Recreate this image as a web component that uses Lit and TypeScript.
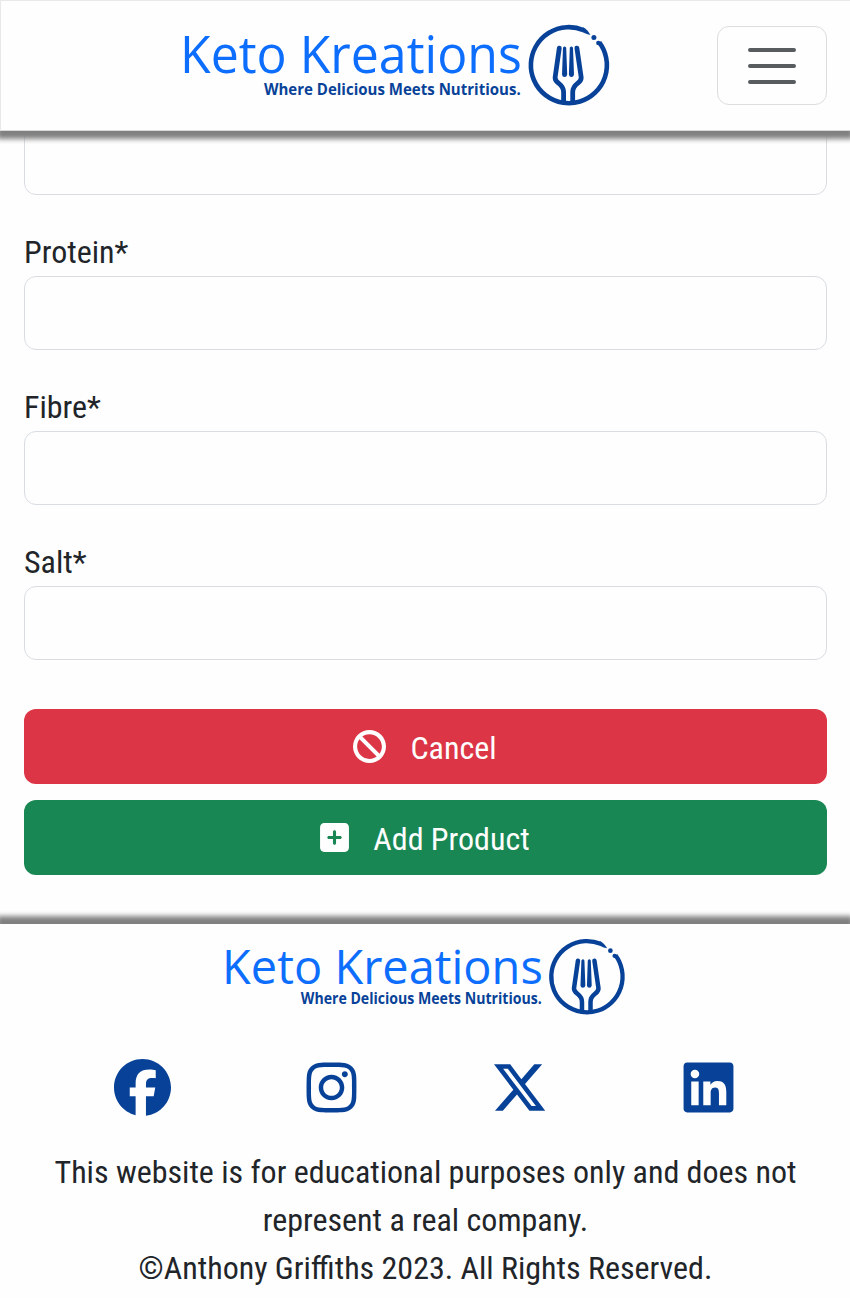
import { LitElement, html, css } from "lit";
import { customElement } from "lit/decorators.js";

const icons = {
  ban: "M367.2 412.5L99.5 144.8C77.1 176.1 64 214.5 64 256c0 106 86 192 192 192c41.5 0 79.9-13.1 111.2-35.5zm45.3-45.3C434.9 335.9 448 297.5 448 256c0-106-86-192-192-192c-41.5 0-79.9 13.1-111.2 35.5L412.5 367.2zM0 256a256 256 0 1 1 512 0A256 256 0 1 1 0 256z",
  plus: "M64 32C28.7 32 0 60.7 0 96V416c0 35.3 28.7 64 64 64H384c35.3 0 64-28.7 64-64V96c0-35.3-28.7-64-64-64H64zM200 344V280H136c-13.3 0-24-10.7-24-24s10.7-24 24-24h64V168c0-13.3 10.7-24 24-24s24 10.7 24 24v64h64c13.3 0 24 10.7 24 24s-10.7 24-24 24H248v64c0 13.3-10.7 24-24 24s-24-10.7-24-24z",
};

const socials = [
  { name: "Facebook", box: "0 0 512 512", d: "M512 256C512 114.6 397.4 0 256 0S0 114.6 0 256C0 376 82.7 476.8 194.2 504.5V334.2H141.4V256h52.8V222.3c0-87.1 39.4-127.5 125-127.5c16.2 0 44.2 3.2 55.7 6.4V172c-6-.6-16.5-1-29.6-1c-42 0-58.2 15.9-58.2 57.2V256h83.6l-14.4 78.2H287V510.1C413.8 494.8 512 386.9 512 256h0z" },
  { name: "Instagram", box: "-32 0 512 512", d: "M224.1 141c-63.6 0-114.9 51.3-114.9 114.9s51.3 114.9 114.9 114.9S339 319.5 339 255.9 287.7 141 224.1 141zm0 189.6c-41.1 0-74.7-33.5-74.7-74.7s33.5-74.7 74.7-74.7 74.7 33.5 74.7 74.7-33.6 74.7-74.7 74.7zm146.4-194.3c0 14.9-12 26.8-26.8 26.8-14.9 0-26.8-12-26.8-26.8s12-26.8 26.8-26.8 26.8 12 26.8 26.8zm76.1 27.2c-1.7-35.9-9.9-67.7-36.2-93.9-26.2-26.2-58-34.4-93.9-36.2-37-2.1-147.9-2.1-184.9 0-35.8 1.7-67.6 9.9-93.9 36.1s-34.4 58-36.2 93.9c-2.1 37-2.1 147.9 0 184.9 1.7 35.9 9.9 67.7 36.2 93.9s58 34.4 93.9 36.2c37 2.1 147.9 2.1 184.9 0 35.9-1.7 67.7-9.9 93.9-36.2 26.2-26.2 34.4-58 36.2-93.9 2.1-37 2.1-147.8 0-184.8zM398.8 388c-7.8 19.6-22.9 34.7-42.6 42.6-29.5 11.7-99.5 9-132.1 9s-102.7 2.6-132.1-9c-19.6-7.8-34.7-22.9-42.6-42.6-11.7-29.5-9-99.5-9-132.1s-2.6-102.7 9-132.1c7.8-19.6 22.9-34.7 42.6-42.6 29.5-11.7 99.5-9 132.1-9s102.7-2.6 132.1 9c19.6 7.8 34.7 22.9 42.6 42.6 11.7 29.5 9 99.5 9 132.1s2.7 102.7-9 132.1z" },
  { name: "X", box: "0 0 512 512", d: "M389.2 48h70.6L305.6 224.2 487 464H345L233.7 318.6 106.5 464H35.8L200.7 275.5 26.8 48H172.4L272.9 180.9 389.2 48zM364.4 421.8h39.1L151.1 88h-42L364.4 421.8z" },
  { name: "LinkedIn", box: "-32 0 512 512", d: "M416 32H31.9C14.3 32 0 46.5 0 64.3v383.4C0 465.5 14.3 480 31.9 480H416c17.6 0 32-14.5 32-32.3V64.3c0-17.8-14.4-32.3-32-32.3zM135.4 416H69V202.2h66.5V416zm-33.2-243c-21.3 0-38.5-17.3-38.5-38.5S80.9 96 102.2 96c21.2 0 38.5 17.3 38.5 38.5 0 21.3-17.2 38.5-38.5 38.5zm282.1 243h-66.4V312c0-24.8-.5-56.7-34.5-56.7-34.6 0-39.9 27-39.9 54.9V416h-66.4V202.2h63.7v29.2h.9c8.9-16.8 30.6-34.5 62.2-34.5 66.5 0 79.9 43.8 79.9 100.9V416z" },
];

@customElement("brand-logo")
export class BrandLogo extends LitElement {
  static styles = css`
    :host { display: block; }
    .logo { display: block; width: 100%; overflow: visible; }
    .name { font: 400 50.4px "Open Sans", sans-serif; fill: #0d6efd; }
    .tag { font: 700 16.4px "Open Sans", sans-serif; fill: #084298; }
    .stroke { fill: none; stroke: #084298; stroke-linecap: round; stroke-linejoin: round; }
    .ring { stroke-linecap: butt; }
    .solid { fill: #084298; }
  `;

  render() {
    return html`<svg class="logo" viewBox="182 25 428 81" role="img" aria-label="Keto Kreations">
      <text class="name" x="180" y="73" textLength="341.8" lengthAdjust="spacingAndGlyphs">Keto Kreations</text>
      <text class="tag" x="263.9" y="94.6" textLength="256.8" lengthAdjust="spacingAndGlyphs">Where Delicious Meets Nutritious.</text>
      <path class="stroke ring" stroke-width="4.6" d="M599.3 42.4A38 38 0 1 1 583.5 30.1"></path>
      <circle class="solid" cx="598.4" cy="43" r="2.3"></circle>
      <path class="solid" d="M583 27.3Q587.5 29.5 590.4 34.9Q587 34.6 582.6 32.3Z"></path>
      <circle class="solid" cx="593.9" cy="37.4" r="2.5"></circle>
      <path class="stroke" stroke-width="4.8" d="M559.3 48.2L555.1 77.5C554.9 84 563.5 83 563.6 92V102M576.9 48.2L581.2 77.5C581.4 84 572.8 83 572.7 92V102"></path>
      <path class="solid" d="M563 47.8Q564.6 45.2 566.2 47.8L567.2 74.5Q566.8 77 564.6 77Q562.2 77 562 74.5ZM569.8 47.8Q571.4 45.2 573 47.8L574 74.5Q573.6 77 571.4 77Q569.2 77 568.9 74.5Z"></path>
    </svg>`;
  }
}

@customElement("app-root")
export class AppRoot extends LitElement {
  static styles = css`
    :host {
      display: flex;
      flex-direction: column;
      height: 1298px;
      overflow: hidden;
      background: #fefefe;
      color: #212529;
      font: 400 32px/48px "Roboto Condensed", Roboto, sans-serif;
      font-stretch: condensed;
    }
    * { box-sizing: border-box; }
    .header {
      position: relative;
      z-index: 1;
      flex: none;
      display: flex;
      justify-content: space-between;
      align-items: flex-start;
      height: 131px;
      padding: 24px 23px 0 181px;
      background: #fefefe;
      border: 1px solid #e9e9e9;
      border-right: 0;
      border-bottom-color: #d8d8d8;
      box-shadow: 0 5px 5px 3px gray;
    }
    .header-logo { width: 428px; }
    .toggle {
      display: flex;
      align-items: center;
      justify-content: center;
      width: 110px;
      height: 79px;
      margin-top: 1px;
      padding: 1px 0 0;
      border: 1.5px solid #dcdddd;
      border-radius: 12px;
      background: none;
    }
    .form {
      flex: none;
      display: flex;
      flex-direction: column;
      height: 792.5px;
      padding: 0 23px 0 24px;
    }
    .field { display: flex; flex-direction: column; margin-bottom: 33px; }
    .previous { margin-top: -10px; }
    .input {
      width: 100%;
      height: 74px;
      border: 1px solid #d9dde2;
      border-radius: 12px;
      background: #fefefe;
    }
    .actions { display: grid; gap: 16px; margin-top: 16.4px; }
    .button {
      display: flex;
      align-items: center;
      justify-content: center;
      gap: 24px;
      height: 75px;
      padding: 0;
      border: 0;
      border-radius: 12px;
      color: #fefefe;
      font: inherit;
    }
    .caption { padding-top: 3px; margin-right: 1px; }
    .danger { background: #dc3545; }
    .success { background: #198754; }
    .footer {
      flex: 1;
      display: flex;
      flex-direction: column;
      align-items: center;
      padding-top: 15.5px;
      background: #fefefe;
      box-shadow: 0 -5px 5px 3px gray;
    }
    .footer-logo { width: 401.5px; }
    .socials {
      display: grid;
      grid-template-columns: repeat(4, 188.8px);
      justify-items: center;
      margin: 44px 0 32px 1.2px;
      color: #084298;
    }
    .social, .icon { display: block; fill: currentColor; }
    .legal { width: 803px; margin: 0 0 0 1px; text-align: center; }
  `;

  private field(label: string) {
    return html`<label class="field">${label}<input class="input" /></label>`;
  }

  render() {
    return html`
      <header class="header">
        <brand-logo class="header-logo"></brand-logo>
        <button class="toggle" aria-label="Menu">
          <svg width="60" height="60" viewBox="0 0 30 30">
            <path fill="none" stroke="#212529" stroke-opacity=".75" stroke-width="2" stroke-linecap="round" d="M4 7h22M4 15h22M4 23h22"></path>
          </svg>
        </button>
      </header>
      <main class="form">
        <div class="field previous"><input class="input" /></div>
        ${["Protein*", "Fibre*", "Salt*"].map((label) => this.field(label))}
        <div class="actions">
          <button class="button danger">
            <svg class="icon" width="33" height="33" viewBox="0 0 512 512"><path d=${icons.ban}></path></svg>
            <span class="caption">Cancel</span>
          </button>
          <button class="button success">
            <svg class="icon" width="29" height="33" viewBox="0 0 448 512"><path d=${icons.plus}></path></svg>
            <span class="caption">Add Product</span>
          </button>
        </div>
      </main>
      <footer class="footer">
        <brand-logo class="footer-logo"></brand-logo>
        <div class="socials">
          ${socials.map((s) => html`<a aria-label=${s.name}><svg class="social" width="57" height="57" viewBox=${s.box}><path d=${s.d}></path></svg></a>`)}
        </div>
        <p class="legal">
          This website is for educational purposes only and does not represent a real company.<br />
          ©Anthony Griffiths 2023. All Rights Reserved.
        </p>
      </footer>
    `;
  }
}
